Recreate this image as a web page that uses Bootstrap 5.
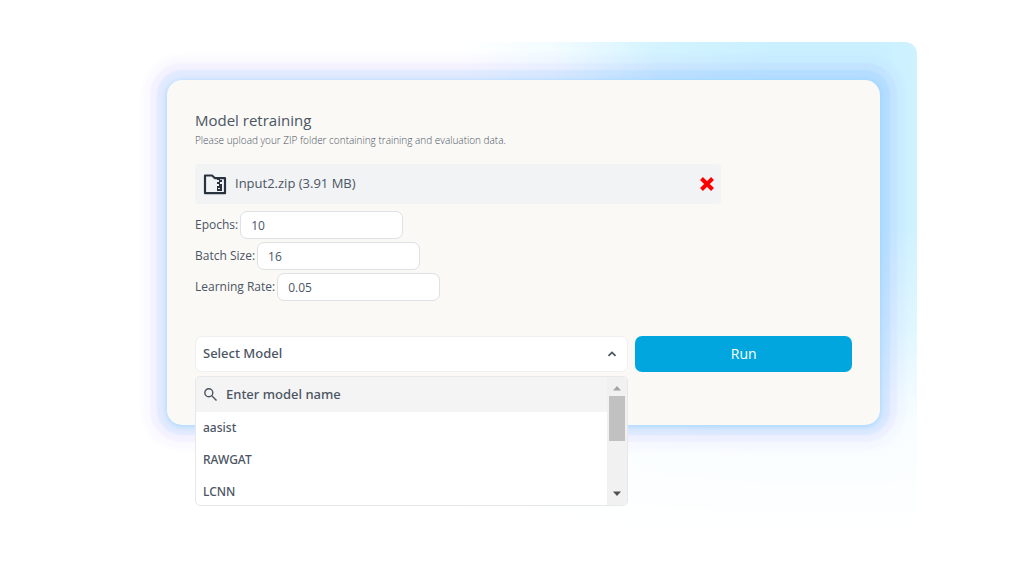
<!DOCTYPE html>
<html lang="en">
<head>
<meta charset="utf-8">
<meta name="viewport" content="width=device-width, initial-scale=1">
<title>Model retraining</title>
<link href="https://cdn.jsdelivr.net/npm/bootstrap@5.3.0/dist/css/bootstrap.min.css" rel="stylesheet">
<style>
  body { font-family: "Open Sans", "Noto Sans", sans-serif; color: #4b5563; background: #fff; }
  .stage { padding: 42px 16px 0; }
  .glow {
    max-width: 810px;
    padding: 38px 37px 108px 60px;
    border-radius: 12px;
    background:
      linear-gradient(to bottom, rgba(255,255,255,0) 38%, rgba(255,255,255,.35) 58%, rgba(255,255,255,.85) 77%, #fff 100%),
      linear-gradient(to right, #fff 44%, #f3fcff 55%, #d3f3ff 68%, #caf0ff 82%, #caf0ff 96%, #d0f2ff 100%);
  }
  .train-card {
    padding: 28px 28px 53px;
    border-radius: 15px;
    background: #faf9f6;
    box-shadow:
      0 1px 4px 1px rgba(130,205,255,.5),
      0 0 2px 10px rgba(60,170,255,.1),
      0 0 2px 17px rgba(110,100,255,.05),
      0 0 4px 25px rgba(120,110,255,.03);
  }
  .train-title { font-size: 15px; line-height: 25px; }
  .train-note { font-size: 10px; line-height: 14px; font-weight: 300; }
  .file-row { width: 80%; height: 40px; margin-top: 17px; padding: 0 6px 0 8px; border-radius: 4px; background: #f2f3f5; font-size: 13px; }
  .clear-btn { width: 16px; height: 16px; }
  .params { gap: 3px; margin-top: 7px; font-size: 12px; }
  .params label { margin-right: 2px; }
  .params .form-control { width: 163px; height: 28px; padding: 0 10px; font-size: 12px; color: #4b5563; border-color: #dfe1e5; border-radius: 7px; }
  .actions { display: grid; grid-template-columns: 2fr 1fr; gap: 7px; margin-top: 35px; }
  .actions .form-select {
    height: 36px; padding: 0 24px 0 7px; font-family: "Noto Sans", sans-serif; font-size: 13px; font-weight: 500; color: #4b5563;
    border-color: #eeeff1; border-radius: 7px; background-image: none;
  }
  .caret-up { top: 13px; right: 11px; pointer-events: none; }
  .run-btn { height: 36px; border-radius: 7px; background: #00a6dd; color: #fff; font-size: 14px; line-height: 20px; }
  .run-btn:hover { background: #0095c7; color: #fff; }
  .model-menu { top: 40px; left: 0; height: 130px; border: 1px solid #e7e8ec; border-radius: 5px; background: #fff; z-index: 10; font-family: "Noto Sans", sans-serif; }
  .search-row { height: 35px; padding: 0 8px; gap: 9px; background: #f4f4f4; }
  .search-row input { font-size: 13px; font-weight: 500; color: #4b5563; outline: 0; }
  .search-row input::placeholder { color: #4b5563; opacity: 1; }
  .model-item { height: 32px; padding: 0 7px; font-size: 12px; font-weight: 500; color: #4b5563; }
  .scroll-track { width: 20px; padding: 8px 2px; background: #f1f1f1; }
  .scroll-thumb { height: 45px; margin-top: 5px; background: #c1c1c1; }
</style>
</head>
<body>
<main class="stage">
  <div class="glow mx-auto">
    <form class="train-card" onsubmit="return false">
      <h1 class="train-title fw-normal m-0">Model retraining</h1>
      <p class="train-note m-0">Please upload your ZIP folder containing training and evaluation data.</p>

      <div class="file-row d-flex align-items-center">
        <svg width="24" height="22" viewBox="0 0 24 22" fill="none" aria-hidden="true">
          <path d="M2 2.500h7l3 2.700h10v15H2z" stroke="#293340" stroke-width="2.200" stroke-linejoin="round"/>
          <path d="M14 5h3v2h-3zM16 7h3v2h-3zM14 9h3v2h-3zM16 11h3v2h-3zM14 13h5v5h-5z" fill="#293340"/>
          <path d="M15 15h2v1h-2z" fill="#f2f3f5"/>
        </svg>
        <span class="ms-2">Input2.zip (3.91 MB)</span>
        <button type="button" class="clear-btn btn p-0 border-0 d-flex ms-auto" aria-label="Remove file">
          <svg width="16" height="16" viewBox="0 0 16 16"><path d="M2.500 2.500l11 11M13.500 2.500l-11 11" stroke="#f00" stroke-width="4"/></svg>
        </button>
      </div>

      <div class="params d-flex flex-column">
        <div class="d-flex align-items-center"><label for="epochs">Epochs:</label><input class="form-control" id="epochs" type="text" value="10"></div>
        <div class="d-flex align-items-center"><label for="batch">Batch Size:</label><input class="form-control" id="batch" type="text" value="16"></div>
        <div class="d-flex align-items-center"><label for="rate">Learning Rate:</label><input class="form-control" id="rate" type="text" value="0.05"></div>
      </div>

      <div class="actions">
        <div class="position-relative">
          <select class="form-select" aria-label="Select Model"><option>Select Model</option></select>
          <svg class="caret-up position-absolute" width="10" height="10" viewBox="0 0 10 10" fill="none" aria-hidden="true"><path d="M1.500 6.800L5 3.400l3.500 3.400" stroke="#4b5563" stroke-width="1.800"/></svg>
          <div class="model-menu position-absolute w-100 d-flex overflow-hidden">
            <div class="flex-grow-1 overflow-hidden">
              <div class="search-row d-flex align-items-center">
                <svg width="13" height="13" viewBox="0 0 13 13" fill="none" stroke="#4b5563" stroke-width="1.400" aria-hidden="true"><circle cx="4.800" cy="4.800" r="4"/><path d="M7.800 7.800L12.500 12.500"/></svg>
                <input class="border-0 bg-transparent p-0 flex-grow-1" type="text" placeholder="Enter model name" aria-label="Enter model name">
              </div>
              <button type="button" class="model-item d-block w-100 border-0 bg-transparent text-start">aasist</button>
              <button type="button" class="model-item d-block w-100 border-0 bg-transparent text-start">RAWGAT</button>
              <button type="button" class="model-item d-block w-100 border-0 bg-transparent text-start">LCNN</button>
            </div>
            <div class="scroll-track d-flex flex-column" aria-hidden="true">
              <svg class="mx-auto" width="10" height="6" viewBox="0 0 10 6"><path d="M1 5.500L5 1l4 4.500z" fill="#a3a3a3"/></svg>
              <div class="scroll-thumb"></div>
              <svg class="mx-auto mt-auto" width="10" height="6" viewBox="0 0 10 6"><path d="M1 .5L5 5l4-4.500z" fill="#505050"/></svg>
            </div>
          </div>
        </div>
        <button type="submit" class="btn run-btn p-0 border-0">Run</button>
      </div>
    </form>
  </div>
</main>
<script src="https://cdn.jsdelivr.net/npm/bootstrap@5.3.0/dist/js/bootstrap.bundle.min.js"></script>
</body>
</html>
